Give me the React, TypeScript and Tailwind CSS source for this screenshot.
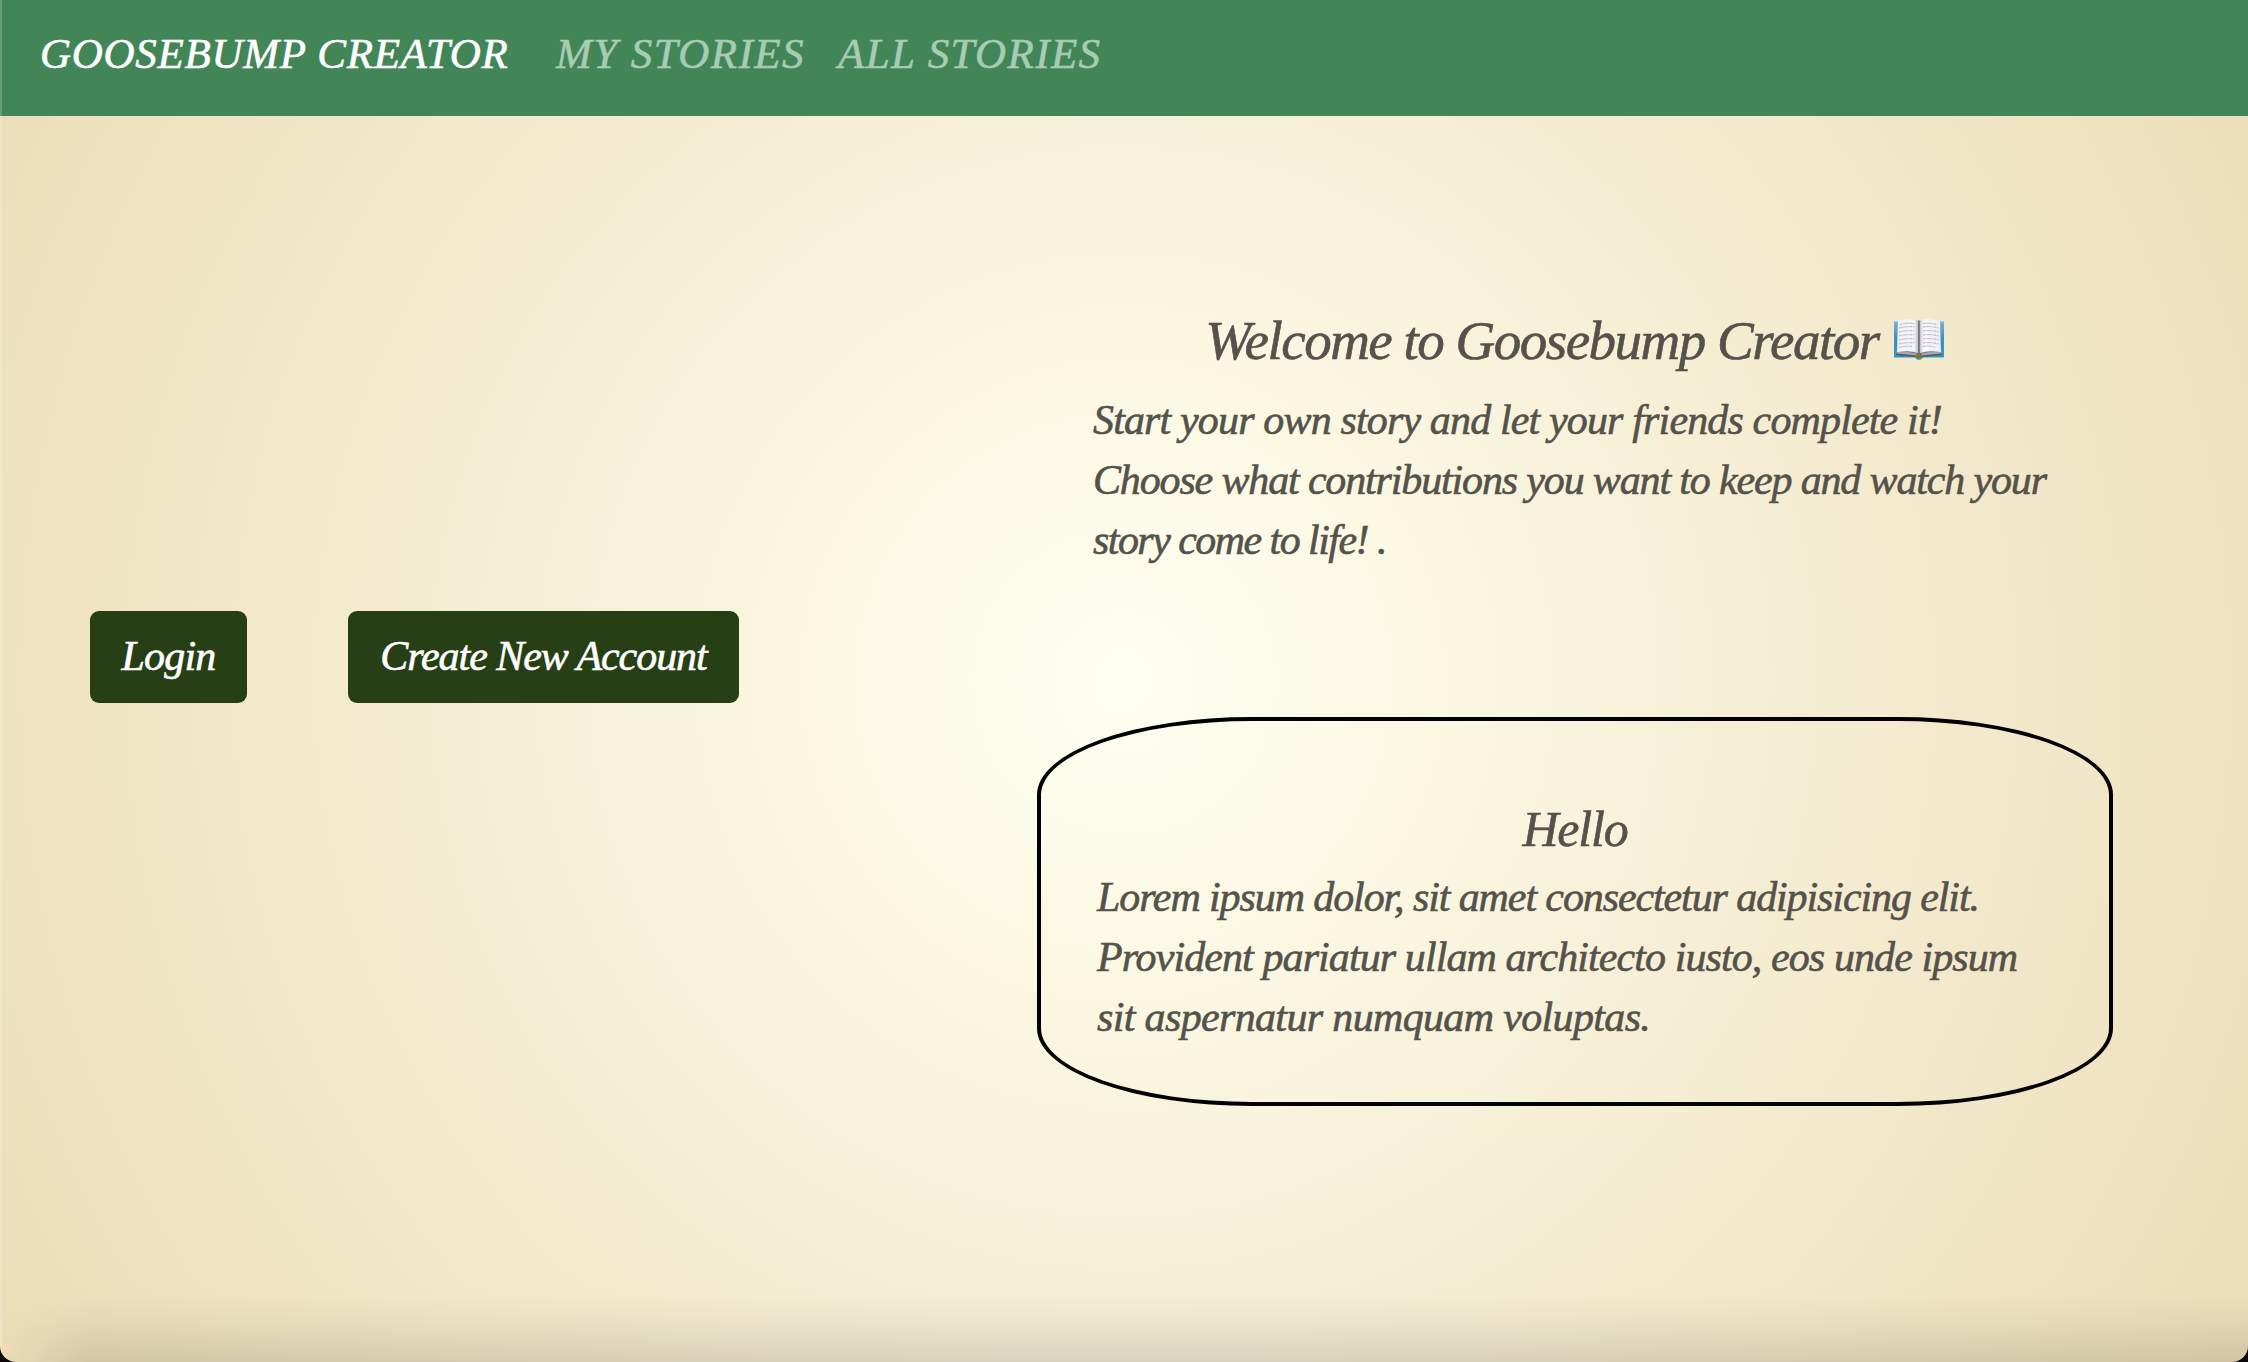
import type { ReactNode } from "react";

function BookIcon() {
  return (
    <svg viewBox="0 0 52 42" className="mb-[3px] h-[42px] w-[52px] shrink-0" aria-hidden="true">
      <defs>
        <linearGradient id="cover" x1="0" y1="0" x2="0" y2="1">
          <stop offset="0" stopColor="#79b4d6" />
          <stop offset="0.45" stopColor="#3a8fc6" />
          <stop offset="1" stopColor="#2a9bcb" />
        </linearGradient>
        <linearGradient id="leftPage" x1="0" y1="0" x2="1" y2="0">
          <stop offset="0" stopColor="#f1f0f5" />
          <stop offset="0.8" stopColor="#f6f5fa" />
          <stop offset="1" stopColor="#b4b3bb" />
        </linearGradient>
        <linearGradient id="rightPage" x1="0" y1="0" x2="1" y2="0">
          <stop offset="0" stopColor="#b9b8c0" />
          <stop offset="0.18" stopColor="#f8f7fb" />
          <stop offset="1" stopColor="#eeedf3" />
        </linearGradient>
      </defs>
      <path d="M1 3.500h50v36H30c-1 1.700-2.500 2.300-4 2.300S23 41.200 22 39.500H1z" fill="url(#cover)" />
      <path d="M3 37l1-5 21 3h2l21-3 1 5-19 2h-8z" fill="#55585d" />
      <path d="M3.500 35.500V32.500l20 2.500v2.500zM48.500 35.500V32.500l-20 2.500v2.500z" fill="#a5a4a6" />
      <path d="M22 37.500q4-2.500 8 0-1 3-4 3t-4-3z" fill="#8a7426" />
      <path d="M5 2.700C12 .800 20 .500 25.600 2.500v33C20 32.800 12 32.600 4 34z" fill="url(#leftPage)" />
      <path d="M47 2.700C40 .800 32 .500 26.400 2.500v33c5.600-2.700 13.600-2.900 21.600-1.500z" fill="url(#rightPage)" />
      <path d="M26 2.500v34" stroke="#77777e" strokeWidth="1.800" />
      <g stroke="#a9a8b0" strokeWidth="0.900" fill="none" strokeDasharray="2.500 0.700 1.500 0.600">
        <path d="M6.500 6.500q8-2 15-1M6 10q8-2 16-1M6 14q8-2 16-1M6 18q8-2 16-1M6 22q8-2 16-1M6 26q8-2 16-1M6 29.500q8-2 13-1" />
        <path d="M30 5.500q8-1 14 1M30 9q8-1 16 1M30 13q8-1 16 1M30 17q8-1 16 1M30 21q8-1 16 1M30 25q8-1 16 1M30 28.500q7-1 12 .700" />
      </g>
    </svg>
  );
}

function Button({ className, children }: { className: string; children: ReactNode }) {
  return (
    <button
      className={`flex h-[92px] items-center justify-center rounded-[9px] bg-[#273f14] pb-px text-[42px] italic text-white ${className}`}
    >
      {children}
    </button>
  );
}

function Line({ className, children }: { className: string; children: ReactNode }) {
  return <span className={`block whitespace-nowrap ${className}`}>{children}</span>;
}

export default function App() {
  return (
    <div className="h-[1362px] w-full bg-[#0a0808] font-['Liberation_Serif',serif] [-webkit-text-stroke:0.6px_currentColor]">
      <div className="relative flex h-full flex-col overflow-hidden rounded-b-[16px] bg-[radial-gradient(circle_at_center,#fffff0,#ecddb8)]">
        <nav className="flex h-[116px] shrink-0 items-center bg-[#428658] pb-[8px] pl-[40px] text-[43px] leading-[60px] italic text-[#a7cbb3]">
          <a className="w-[516px] whitespace-nowrap tracking-[0.7px] text-white">GOOSEBUMP CREATOR</a>
          <a className="w-[282px] whitespace-nowrap tracking-[1.45px]">MY STORIES</a>
          <a className="whitespace-nowrap tracking-[1.4px]">ALL STORIES</a>
        </nav>

        <main className="flex flex-1">
          <section className="flex w-[1037px] items-start gap-[101px] pt-[495px] pl-[90px]">
            <Button className="w-[157px] tracking-[-0.8px]">Login</Button>
            <Button className="w-[391px] tracking-[-1.05px]">Create New Account</Button>
          </section>

          <section className="flex w-[1076px] flex-col pt-[185px] text-[42px] leading-[60px] italic text-[#54524a]">
            <div className="flex h-[79px] items-center justify-center gap-[14px]">
              <h1 className="whitespace-nowrap text-[55px] tracking-[-1.5px]">Welcome to Goosebump Creator</h1>
              <BookIcon />
            </div>
            <p className="mt-[10px] pl-[56px]">
              <Line className="tracking-[-0.85px]">Start your own story and let your friends complete it!</Line>
              <Line className="tracking-[-1.15px]">Choose what contributions you want to keep and watch your</Line>
              <Line className="tracking-[-1.55px]">story come to life! .</Line>
            </p>

            <div className="mt-[147px] h-[389px] rounded-[20%] border-4 border-black pt-[71px] pl-[56px]">
              <h2 className="pr-[56px] text-center text-[50px] leading-[75px] tracking-[-1.2px]">Hello</h2>
              <p>
                <Line className="tracking-[-1.1px]">Lorem ipsum dolor, sit amet consectetur adipisicing elit.</Line>
                <Line className="tracking-[-0.91px]">Provident pariatur ullam architecto iusto, eos unde ipsum</Line>
                <Line className="tracking-[-0.65px]">sit aspernatur numquam voluptas.</Line>
              </p>
            </div>
          </section>
        </main>

        <div className="pointer-events-none absolute inset-x-0 bottom-0 h-[70px] bg-[linear-gradient(to_bottom,transparent,rgba(0,0,0,0.03)_40%,rgba(0,0,0,0.11))] [mask-image:linear-gradient(to_right,transparent,black_90px)]" />
        <div className="pointer-events-none absolute inset-y-0 left-0 w-[2px] bg-white/20" />
      </div>
    </div>
  );
}
